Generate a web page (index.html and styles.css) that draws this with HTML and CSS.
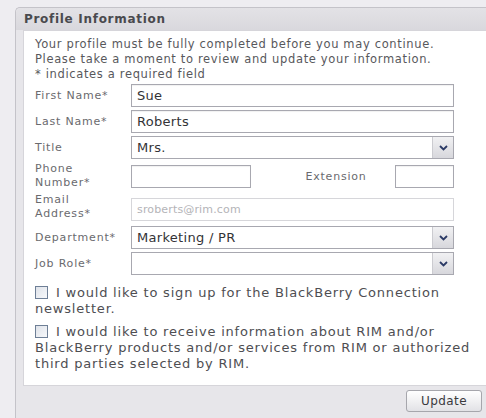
FILE: index.html
```html
<!DOCTYPE html>
<html>
<head>
<meta charset="utf-8">
<link rel="stylesheet" href="styles.css">
</head>
<body>
<div class="panel">
  <div class="panel-head">Profile Information</div>
  <div class="panel-body">
    <p class="intro">Your profile must be fully completed before you may continue.<br>Please take a moment to review and update your information.<br>* indicates a required field</p>
    <div class="form">
      <label class="lbl">First Name*</label>
      <div class="field"><div class="input">Sue</div></div>

      <label class="lbl">Last Name*</label>
      <div class="field"><div class="input">Roberts</div></div>

      <label class="lbl">Title</label>
      <div class="field"><div class="select"><span class="val">Mrs.</span><span class="arrow"><svg width="9" height="6" viewBox="0 0 9 6"><path d="M1 1 L4.5 4.5 L8 1" fill="none" stroke="#2b3a66" stroke-width="1.8"/></svg></span></div></div>

      <label class="lbl two">Phone<br>Number*</label>
      <div class="field phone">
        <div class="input short"></div>
        <span class="ext-lbl">Extension</span>
        <div class="input ext"></div>
      </div>

      <label class="lbl two email-lbl">Email<br>Address*</label>
      <div class="field email"><div class="input disabled">sroberts@rim.com</div></div>

      <label class="lbl">Department*</label>
      <div class="field"><div class="select"><span class="val">Marketing / PR</span><span class="arrow"><svg width="9" height="6" viewBox="0 0 9 6"><path d="M1 1 L4.5 4.5 L8 1" fill="none" stroke="#2b3a66" stroke-width="1.8"/></svg></span></div></div>

      <label class="lbl">Job Role*</label>
      <div class="field"><div class="select"><span class="val"></span><span class="arrow"><svg width="9" height="6" viewBox="0 0 9 6"><path d="M1 1 L4.5 4.5 L8 1" fill="none" stroke="#2b3a66" stroke-width="1.8"/></svg></span></div></div>
    </div>
    <p class="opt"><span class="check"></span> I would like to sign up for the BlackBerry Connection newsletter.</p>
    <p class="opt"><span class="check"></span> I would like to receive information about RIM and/or BlackBerry products and/or services from RIM or authorized third parties selected by RIM.</p>
  </div>
  <div class="panel-foot">
    <button class="btn">Update</button>
  </div>
</div>
</body>
</html>
```

FILE: styles.css
```css
html, body {
  margin: 0;
  padding: 0;
  height: 100%;
  overflow: hidden;
}

body {
  background: #eeedf1;
  font-family: "DejaVu Sans", Verdana, sans-serif;
}

/* outer panel runs off the right and bottom of the window */
.panel {
  margin: 7px 0 0 15px;
  width: 474px;
  height: 410px;
  border: 1px solid #c4c3c9;
  border-right: 0;
  border-bottom: 0;
  border-radius: 5px 0 0 0;
  background: #e7e6ea;
}

.panel-head {
  height: 22px;
  line-height: 22px;
  padding-left: 8px;
  font-weight: bold;
  font-size: 12px;
  letter-spacing: 0.7px;
  color: #4a4a4e;
  background: linear-gradient(#e3e2e6, #d9d8dd);
  border-radius: 5px 0 0 0;
}

.panel-body {
  margin-left: 7px;
  height: 340px;
  background: #fff;
  border: 1px solid #d6d5da;
  border-right: 0;
  padding: 6px 0 8px 11px;
}

.intro {
  margin: 0;
  font-size: 11.5px;
  line-height: 15px;
  color: #58585c;
  letter-spacing: 0.65px;
}

.form {
  display: grid;
  grid-template-columns: 96px 323px;
  row-gap: 3px;
  margin-top: 2px;
}

.lbl {
  display: flex;
  align-items: center;
  font-size: 11px;
  line-height: 15px;
  color: #6a6a6e;
  letter-spacing: 0.8px;
}

.lbl.two {
  line-height: 14px;
}

.lbl.email-lbl {
  margin-bottom: 2px;
}

.field {
  display: flex;
  align-items: center;
}

.field.email {
  align-items: flex-end;
  margin-bottom: 2px;
}

.input {
  box-sizing: border-box;
  width: 100%;
  height: 23px;
  border: 1px solid #a8a8b0;
  box-shadow: inset 0 1px 1px rgba(0, 0, 0, 0.06);
  font-size: 13px;
  letter-spacing: 0.3px;
  line-height: 21px;
  padding-left: 5px;
  color: #333336;
  background: #fff;
}

.input.disabled {
  border-color: #d6d6da;
  box-shadow: none;
  color: #b4b4b8;
  font-size: 11px;
  letter-spacing: 0.15px;
}

.phone .short {
  width: 120px;
  flex: none;
}

.ext-lbl {
  flex: 1;
  text-align: center;
  font-size: 11px;
  color: #6a6a6e;
  letter-spacing: 0.8px;
  padding-left: 26px;
}

.phone .ext {
  width: 59px;
  flex: none;
}

.select {
  box-sizing: border-box;
  width: 100%;
  height: 23px;
  display: flex;
  border: 1px solid #a8a8b0;
  background: #fff;
}

.select .val {
  flex: 1;
  font-size: 13px;
  letter-spacing: 0.3px;
  line-height: 21px;
  padding-left: 5px;
  color: #333336;
}

.select .arrow {
  width: 20px;
  display: flex;
  align-items: center;
  justify-content: center;
  background: linear-gradient(#f1f1f3, #d7d7dc);
  border-left: 1px solid #cbcbd0;
}

.opt {
  margin: 10px 0 0;
  width: 452px;
  font-size: 13px;
  line-height: 16px;
  color: #4e4e52;
  letter-spacing: 0.8px;
}

.opt + .opt {
  margin-top: 7px;
}

.check {
  display: inline-block;
  box-sizing: border-box;
  width: 13px;
  height: 13px;
  border: 1px solid #6e7f96;
  background: linear-gradient(135deg, #dfe3ea, #f7f8fa);
  vertical-align: -2px;
  margin-right: 3px;
}

.panel-foot {
  display: flex;
  justify-content: flex-end;
  padding: 4px 8px 0 0;
}

.btn {
  width: 76px;
  height: 22px;
  border: 1px solid #a6a6ac;
  border-radius: 3px;
  background: linear-gradient(#ffffff, #e2e2e6);
  font-family: "DejaVu Sans", Verdana, sans-serif;
  font-size: 12px;
  letter-spacing: 0.4px;
  color: #3a3a3e;
  padding: 0;
}
```
